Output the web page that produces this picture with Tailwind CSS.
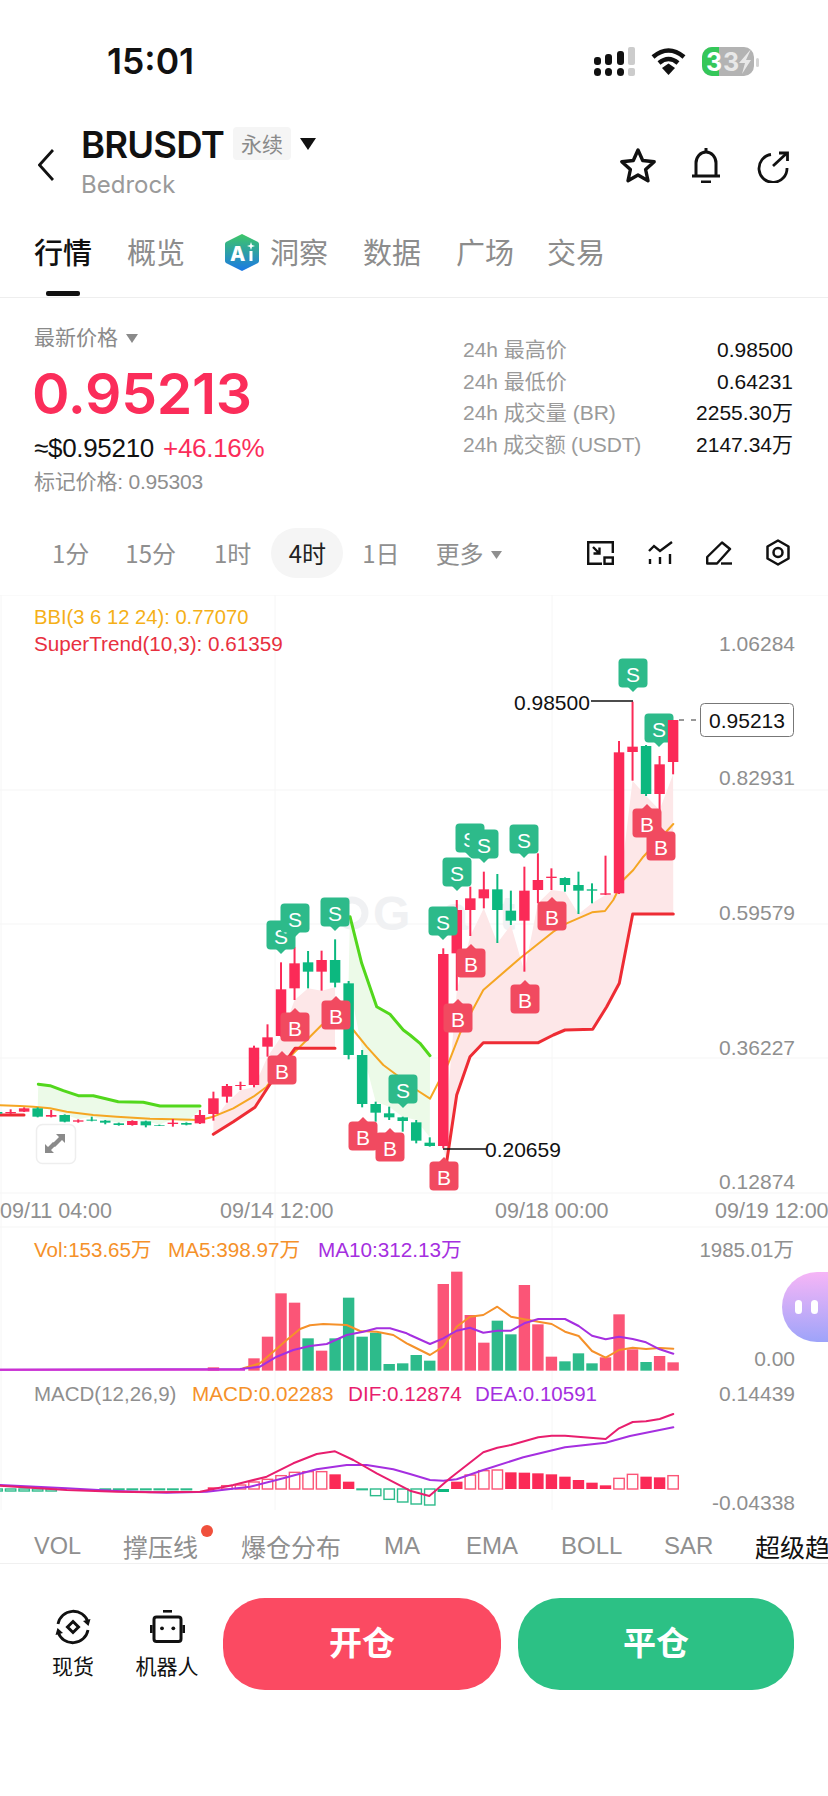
<!DOCTYPE html>
<html lang="zh-CN">
<head>
  <meta charset="UTF-8" />
  <meta name="viewport" content="width=device-width, initial-scale=1.0"/>
  <title>BRUSDT</title>
  <script src="https://cdn.jsdelivr.net/npm/@tailwindcss/browser@4"></script>
</head>
<body class="bg-white text-[#111] font-['Liberation_Sans','Noto_Sans_CJK_SC',sans-serif]">
<div class="relative w-[828px] h-[1796px] overflow-hidden flex flex-col bg-white">

  <!-- status bar -->
  <div class="h-[110px] shrink-0 flex items-start justify-between pt-[43px] pl-[107px] pr-[68px]">
    <span class="font-['Inter',sans-serif] font-semibold text-[35.500px] leading-[38px]">15:01</span>
    <svg width="168" height="32" viewBox="592 46 168 32" class="mt-[3px] font-['Inter',sans-serif]">
      <rect x="594" y="57" width="7" height="8" rx="3" fill="#111"/><rect x="605" y="54" width="7" height="11" rx="3" fill="#111"/><rect x="617" y="51" width="7" height="14" rx="3" fill="#111"/><rect x="628" y="47" width="7" height="18" rx="2" fill="#ccc"/>
      <rect x="594" y="68" width="7" height="8" rx="3.5" fill="#111"/><rect x="605" y="68" width="7" height="8" rx="3.5" fill="#111"/><rect x="617" y="68" width="7" height="8" rx="3.5" fill="#111"/><rect x="628" y="68" width="7" height="8" rx="2" fill="#ccc"/>
      <path d="M653 57 Q668.500 44 684 57" fill="none" stroke="#111" stroke-width="4.500"/>
      <path d="M659 63 Q668.500 55 678 63" fill="none" stroke="#111" stroke-width="4.500"/>
      <path d="M662 68 L668.500 63.500 L675 68 L668.500 75 Z" fill="#111"/>
      <rect x="702" y="47" width="52" height="29" rx="10" fill="#b3b3b3"/>
      <path d="M712 47 H719 V76 H712 A10 10 0 0 1 702 66 V57 A10 10 0 0 1 712 47 Z" fill="#34c759"/>
      <rect x="756" y="58" width="3" height="9" rx="1.500" fill="#d4d4d4"/>
      <text x="706" y="71" font-size="25" font-weight="700" fill="#fff">3</text>
      <text x="723" y="71" font-size="25" font-weight="700" fill="#e8e8e8">3</text>
      <path d="M751 49 L739 63 H745 L742 74 L751 60 H746 Z" fill="#e8e8e8"/>
    </svg>
  </div>

  <!-- title row -->
  <div class="h-[112px] shrink-0 flex items-start pl-[38px] pr-[38px]">
    <svg width="16" height="32" viewBox="0 0 16 32" class="mt-[39px] shrink-0" fill="none" stroke="#111" stroke-width="2.800"><path d="M15 1 L1.500 16 L15 31"/></svg>
    <div class="ml-[27px] w-[540px] shrink-0">
      <div class="flex items-center h-[33px] mt-[19px]">
        <span class="w-[152px] shrink-0 font-['Inter',sans-serif] font-semibold text-[36.500px] leading-[33px] tracking-[-0.8px]">BRUSDT</span>
        <span class="-mt-[4px] w-[58px] h-[33px] rounded-[4px] bg-[#f5f5f5] text-[#8a8a8a] text-[21px] flex items-center justify-center font-['Noto_Sans_CJK_SC',sans-serif]">永续</span>
        <svg width="16" height="12" viewBox="0 0 16 12" class="ml-[9px] -mt-[3px]"><path d="M0 0 H16 L8 12 Z" fill="#111"/></svg>
      </div>
      <div class="mt-[9px] text-[24px] leading-[28px] text-[#9a9a9a] font-['Inter',sans-serif]">Bedrock</div>
    </div>
    <svg width="40" height="40" viewBox="0 0 40 40" class="-ml-[3px] mt-[37px] shrink-0" fill="none" stroke="#111" stroke-width="3.400" stroke-linejoin="round"><path d="M20 3 L24.700 13.500 L36.200 14.750 L27.600 22.500 L30 33.750 L20 28 L10 33.750 L12.400 22.500 L3.800 14.750 L15.300 13.500 Z"/></svg>
    <svg width="30" height="36" viewBox="0 0 30 36" class="ml-[33px] mt-[37px] shrink-0" fill="none" stroke="#111" stroke-width="3"><path d="M5 29 V16 A10 11 0 0 1 25 16 V29"/><path d="M1 29 H29"/><path d="M15 1 V5"/><path d="M10 35 H20" stroke-width="3"/></svg>
    <svg width="32" height="32" viewBox="0 0 32 32" class="ml-[36px] mt-[41px] shrink-0" fill="none" stroke="#111" stroke-width="2.800"><path d="M14 3.500 A14 14 0 1 0 30 17"/><path d="M16 15 L30 2"/><path d="M22 2 H30.500 V10"/></svg>
  </div>

  <!-- tabs -->
  <div class="relative h-[76px] shrink-0 border-b border-[#eeeeee] flex items-start pl-[34px] text-[29px] leading-[38px] text-[#8c8c8c] font-['Noto_Sans_CJK_SC',sans-serif]">
    <span class="relative mt-[10px] text-[#111] font-medium">行情<span class="absolute left-[12px] top-[59px] w-[34px] h-[5px] rounded-[2px] bg-[#111]"></span></span>
    <span class="ml-[35px] mt-[10px]">概览</span>
    <svg width="36" height="39" viewBox="0 0 36 39" class="ml-[39px] mt-[11px] shrink-0 font-['Inter',sans-serif]">
      <defs><linearGradient id="aiGrad" x1="0" y1="0" x2="0" y2="1"><stop offset="0" stop-color="#3ec767"/><stop offset="1" stop-color="#1c78e6"/></linearGradient></defs>
      <path d="M18 1 L34 9 Q35 10 35 11 V28 Q35 29 34 30 L18 38 L2 30 Q1 29 1 28 V11 Q1 10 2 9 Z" fill="url(#aiGrad)"/>
      <text x="6" y="28" font-size="20" font-weight="800" fill="#fff">A</text>
      <path d="M27 9 L28 12 L31 13 L28 14 L27 17 L26 14 L23 13 L26 12 Z" fill="#fff"/>
      <rect x="25.500" y="18" width="3" height="10" fill="#fff"/>
    </svg>
    <span class="ml-[10px] mt-[10px]">洞察</span>
    <span class="ml-[35px] mt-[10px]">数据</span>
    <span class="ml-[35px] mt-[10px]">广场</span>
    <span class="ml-[33px] mt-[10px]">交易</span>
  </div>

  <!-- price block -->
  <div class="h-[222px] shrink-0 flex pl-[34px] pr-[35px]">
    <div class="w-[429px] shrink-0">
      <div class="mt-[26px] flex items-center h-[26px] text-[21px] text-[#8a8a8a] font-['Noto_Sans_CJK_SC',sans-serif]">最新价格
        <svg width="12" height="9" viewBox="0 0 12 9" class="ml-[8px] mt-[3px]"><path d="M0 0 H12 L6 9 Z" fill="#8a8a8a"/></svg>
      </div>
      <div class="mt-[11px] -ml-[2px] h-[66px] font-['Inter',sans-serif] font-semibold text-[57px] leading-[66px] tracking-[-0.3px] text-[#fb2d5a]">0.95213</div>
      <div class="mt-[6px] flex items-center h-[30px] text-[26px] leading-[30px] tracking-[-0.3px]">
        <span>≈$0.95210</span><span class="ml-[9px] text-[#fb2d5a]">+46.16%</span>
      </div>
      <div class="mt-[4px] text-[21px] leading-[30px] tracking-[-0.2px] text-[#8f8f8f]">标记价格: 0.95303</div>
    </div>
    <div class="flex-1 mt-[36px] text-[21px] leading-[32px]">
      <div class="flex justify-between h-[31.700px]"><span class="text-[#9a9a9a]">24h 最高价</span><span>0.98500</span></div>
      <div class="flex justify-between h-[31.700px]"><span class="text-[#9a9a9a]">24h 最低价</span><span>0.64231</span></div>
      <div class="flex justify-between h-[31.700px]"><span class="text-[#9a9a9a]">24h 成交量 (BR)</span><span>2255.30万</span></div>
      <div class="flex justify-between h-[31.700px]"><span class="text-[#9a9a9a] tracking-[-0.2px]">24h 成交额 (USDT)</span><span>2147.34万</span></div>
    </div>
  </div>

  <!-- interval row -->
  <div class="h-[75px] shrink-0 flex items-start text-[24px] text-[#8f8f8f] font-['Noto_Sans_CJK_SC',sans-serif]">
    <span class="ml-[52px] mt-[8px] h-[50px] leading-[50px]">1分</span>
    <span class="ml-[36px] mt-[8px] h-[50px] leading-[50px]">15分</span>
    <span class="ml-[38px] mt-[8px] h-[50px] leading-[50px]">1时</span>
    <span class="ml-[20px] mt-[8px] w-[72px] h-[50px] leading-[50px] rounded-[25px] bg-[#f5f5f5] text-center text-[#222]">4时</span>
    <span class="ml-[19px] mt-[8px] h-[50px] leading-[50px]">1日</span>
    <span class="ml-[36px] mt-[8px] h-[50px] leading-[50px]">更多</span>
    <svg width="11" height="8" viewBox="0 0 11 8" class="ml-[7px] mt-[31px]"><path d="M0 0 H11 L5.500 8 Z" fill="#8f8f8f"/></svg>
    <svg width="27" height="24" viewBox="0 0 27 24" class="ml-[85px] mt-[21px]" fill="none" stroke="#111" stroke-width="2.400"><path d="M15 22.800 H1.200 V1.200 H25.800 V12"/><rect x="17.500" y="16.500" width="8.300" height="6.300"/><path d="M6 6 L12 12 M12.500 6.500 V12.500 H6.500"/></svg>
    <svg width="25" height="24" viewBox="0 0 25 24" class="ml-[34px] mt-[21px]" fill="none" stroke="#111" stroke-width="2.400"><path d="M1 10 L6 5 L12 10 L24 1"/><path d="M2 18 V23 M12 16 V23 M22 13 V23"/></svg>
    <svg width="26" height="24" viewBox="0 0 26 24" class="ml-[33px] mt-[21px]" fill="none" stroke="#111" stroke-width="2.400" stroke-linejoin="round"><path d="M1.200 16 L16 1.500 L24 8 L11 22.500 H1.200 Z"/><path d="M15 22.500 H26"/></svg>
    <svg width="24" height="27" viewBox="0 0 24 27" class="ml-[34px] mt-[19px]" fill="none" stroke="#111" stroke-width="2.500" stroke-linejoin="round"><path d="M12 1.500 L22.500 7.500 V19.500 L12 25.500 L1.500 19.500 V7.500 Z"/><circle cx="12" cy="13.500" r="4.500"/></svg>
  </div>

  <!-- chart canvas, drawn in page coordinates -->
  <div class="relative h-[915px] shrink-0">
    <svg id="chart" width="828" height="915" viewBox="0 595 828 915" class="block font-['Liberation_Sans','Noto_Sans_CJK_SC',sans-serif]"></svg>
    <!-- assistant bubble -->
    <div class="absolute right-0 top-[677px] w-[46px] h-[70px] rounded-l-[35px] bg-gradient-to-b from-[#f6b5f6] to-[#9da3f9] flex items-center pl-[13px] gap-[9px]">
      <span class="w-[7px] h-[14px] rounded-full bg-white"></span>
      <span class="w-[7px] h-[14px] rounded-full bg-white"></span>
    </div>
  </div>

  <!-- indicator tabs -->
  <div class="h-[54px] shrink-0 border-b border-[#f0f0f0] flex items-start overflow-hidden whitespace-nowrap text-[25px] leading-[36px] pt-[18px] text-[#8f8f8f] font-['Noto_Sans_CJK_SC',sans-serif]">
    <span class="ml-[34px] w-[47px] shrink-0 text-[23.500px] font-['Liberation_Sans',sans-serif]">VOL</span>
    <span class="relative ml-[42px] w-[74px] shrink-0">撑压线<span class="absolute left-[78px] top-[-3px] w-[12px] h-[12px] rounded-full bg-[#f0503c]"></span></span>
    <span class="ml-[44px] w-[100px] shrink-0">爆仓分布</span>
    <span class="ml-[43px] w-[37px] shrink-0 text-[24px] font-['Liberation_Sans',sans-serif]">MA</span>
    <span class="ml-[45px] w-[50px] shrink-0 text-[24px] font-['Liberation_Sans',sans-serif]">EMA</span>
    <span class="ml-[45px] w-[58px] shrink-0 text-[24px] font-['Liberation_Sans',sans-serif]">BOLL</span>
    <span class="ml-[45px] w-[46px] shrink-0 text-[24px] font-['Liberation_Sans',sans-serif]">SAR</span>
    <span class="ml-[45px] shrink-0 text-[#111]">超级趋势</span>
  </div>

  <!-- bottom actions -->
  <div class="flex-1 flex items-start pt-[34px] font-['Noto_Sans_CJK_SC',sans-serif]">
    <div class="ml-[42px] w-[62px] flex flex-col items-center mt-[11px]">
      <svg width="36" height="36" viewBox="0 0 36 36" fill="none" stroke="#111" stroke-width="2.800">
        <path d="M3 15 A15.500 15.500 0 0 1 33 13"/><path d="M33 21 A15.500 15.500 0 0 1 3 23"/>
        <path d="M28 12 L33.500 17 L35.500 10 Z" fill="#111" stroke="none"/><path d="M8 24 L2.500 19 L0.500 26 Z" fill="#111" stroke="none"/>
        <path d="M18 12.500 L23.500 18 L18 23.500 L12.500 18 Z" stroke-width="3"/>
      </svg>
      <span class="mt-[8px] text-[21px] leading-[24px]">现货</span>
    </div>
    <div class="ml-[31px] w-[64px] flex flex-col items-center mt-[12px]">
      <svg width="35" height="33" viewBox="0 0 35 33" fill="none" stroke="#111">
        <path d="M13 1.300 H22" stroke-width="2.600"/><rect x="4" y="7" width="27" height="24.500" rx="2.500" stroke-width="3"/>
        <path d="M1.300 15 V23 M33.700 15 V23" stroke-width="2.600"/>
        <circle cx="12" cy="18.300" r="1.900" fill="#111" stroke="none"/><circle cx="23.300" cy="18.300" r="1.900" fill="#111" stroke="none"/>
      </svg>
      <span class="mt-[10px] text-[21px] leading-[24px] whitespace-nowrap">机器人</span>
    </div>
    <button class="ml-[24px] w-[278px] h-[92px] rounded-[42px] bg-[#fb4a62] text-white text-[33px] font-bold pb-[4px]">开仓</button>
    <button class="ml-[17px] w-[276px] h-[92px] rounded-[42px] bg-[#2cc185] text-white text-[33px] font-bold pb-[4px]">平仓</button>
  </div>
</div>

<script>
  const RED = "#fb2a57", GREEN = "#0cb87f", VRED = "#fb5577", VGREEN = "#2dbb8b";
  const X = i => 37.67 + 13.52 * i;
  // measured points: [x, y] at 3x from a crop whose corner is (ox, oy)
  const crop = (ox, oy, pts) => pts.map(([x, y]) => [ox + x / 3, oy + y / 3]);
  const str = pts => pts.map(p => p[0].toFixed(1) + "," + p[1].toFixed(1)).join(" ");
  const line = (pts, color, w) => `<polyline points="${str(pts)}" fill="none" stroke="${color}" stroke-width="${w}" stroke-linejoin="round" stroke-linecap="round"/>`;
  const poly = (pts, color) => `<polygon points="${str(pts)}" fill="${color}"/>`;
  const label = (x, y, txt, color, anchor = "start", size = 20.5) => `<text x="${x}" y="${y}" fill="${color}" text-anchor="${anchor}" font-size="${size}" dominant-baseline="central">${txt}</text>`;

  // [high, bodyTop, bodyBottom, low, colour], crop units
  const first = [
    [634,636,641,642,"g"], [628,636,640,642,"r"], [622,625,635,636,"r"],
    [622,625,650,652,"g"], [630,645,650,652,"r"], [643,645,665,667,"g"], [658,661,665,668,"r"], [650,659,662,664,"g"],
    [660,662,668,673,"g"], [668,670,675,677,"g"], [661,663,675,677,"r"], [662,664,676,682,"g"], [674,675,677,678,"g"],
    [657,668,672,680,"r"], [667,669,674,676,"g"], [630,645,670,672,"r"], [575,595,642,662,"r"], [552,558,590,608,"r"],
    [545,555,558,570,"r"], [437,443,555,562,"r"], [373,412,440,470,"r"], [187,268,408,410,"r"], [140,190,265,300,"r"],
    [153,187,215,265,"g"], [152,180,215,272,"r"], [118,180,248,262,"g"], [243,250,465,478,"g"], [450,465,612,622,"g"],
    [605,612,638,665,"g"], [620,640,652,660,"g"], [650,652,663,695,"g"], [660,667,722,730,"g"], [712,728,738,740,"g"],
    [145,162,738,745,"r"], [0,30,160,272,"r"]
  ];
  const second = [
    [740,775,810,888,"r"], [695,748,775,805,"r"], [702,748,810,909,"g"], [752,812,842,855,"g"], [680,752,842,995,"r"],
    [640,720,750,790,"r"], [685,710,714,750,"r"], [712,714,735,755,"g"], [695,735,752,822,"g"], [730,748,752,790,"g"],
    [647,760,764,765,"r"], [303,337,760,762,"r"], [185,320,336,422,"r"], [315,318,462,468,"g"], [348,373,462,510,"r"],
    [240,240,366,403,"r"]
  ];
  const candles = [
    ...first.map((c, n) => ({ i: n - 3, hi: 900 + c[0] / 3, top: 900 + c[1] / 3, bot: 900 + c[2] / 3, lo: 900 + c[3] / 3, col: c[4] })),
    ...second.map((c, n) => ({ i: n + 32, hi: 640 + c[0] / 3, top: 640 + c[1] / 3, bot: 640 + c[2] / 3, lo: 640 + c[3] / 3, col: c[4] }))
  ];
  const at = (a, b) => candles.filter(c => c.i >= a && c.i <= b);

  const bbi = [...crop(0, 900, [[0,616],[60,618],[100,620],[150,625],[200,635],[280,645],[350,650],[450,656],[520,658],[600,660],[640,650],[700,625],[760,590],[800,560],[850,490],[900,440],[965,375],[1006,350],[1060,390],[1100,440],[1150,495],[1190,525],[1250,570]]),
    ...crop(410, 900, [[60,596],[115,490],[150,400],[220,270],[330,175],[430,95],[470,70],[546,37],[585,33],[610,0]]),
    ...crop(410, 640, [[640,720],[670,690],[700,650],[790,552]])];
  const greenA = crop(0, 900, [[115,553],[150,557],[190,572],[235,587],[280,587],[355,605],[430,607],[480,618],[600,618]]);
  const greenB = [...crop(0, 900, [[1050,50],[1085,190],[1130,320],[1170,343],[1210,390]]), ...crop(410, 900, [[0,405],[30,430],[60,467]])];
  const redA = crop(0, 900, [[640,703],[700,665],[765,622],[805,560],[845,500],[885,445],[1005,445]]);
  const redB = crop(410, 900, [[110,785],[140,585],[180,470],[220,428],[385,428],[430,405],[465,390],[548,388],[590,320],[628,250],[668,42],[790,42]]);

  const marker = (cx, cy, type) => {
    const s = type === "S";
    const nub = s ? `${cx-5},${cy+14} ${cx},${cy+19} ${cx+5},${cy+14}` : `${cx-5},${cy-14} ${cx},${cy-19} ${cx+5},${cy-14}`;
    const fill = s ? "#2dba8a" : "#f14a60";
    return `<rect x="${cx-14.5}" y="${cy-14.5}" width="29" height="29" rx="4" fill="${fill}"/><polygon points="${nub}" fill="${fill}"/>` +
      `<text x="${cx}" y="${cy+1}" fill="#fff" text-anchor="middle" dominant-baseline="central" font-size="21">${type}</text>`;
  };

  let svg = "";
  // grid
  [595, 790, 924, 1058, 1193, 1227].forEach(y => svg += `<line x1="0" x2="828" y1="${y}" y2="${y}" stroke="#f5f5f5"/>`);
  [1, 275, 552].forEach(x => svg += `<line x1="${x}" x2="${x}" y1="595" y2="1510" stroke="#f6f6f6"/>`);
  // watermark
  svg += `<text x="373" y="930" font-size="48" font-weight="700" fill="#f0f1f3" textLength="200">Gate</text><circle cx="352" cy="913" r="13" fill="none" stroke="#f0f1f3" stroke-width="7"/>`;
  // fills between the bands and the candles
  svg += poly([...greenA, ...at(0, 12).reverse().map(c => [X(c.i), c.hi])], "#ecfae8");
  svg += poly([...greenB, ...at(23, 29).reverse().map(c => [X(c.i), c.hi])], "#ecfae8");
  svg += poly([...at(13, 22).map(c => [X(c.i), c.lo]), ...[...redA].reverse()], "#fde7e8");
  svg += poly([...at(30, 47).map(c => [X(c.i), c.lo]), ...[...redB].reverse()], "#fde7e8");
  svg += line(greenA, "#52d71c", 3) + line(greenB, "#52d71c", 3);
  svg += line(bbi, "#f5a623", 2);
  svg += line([[0,1115],[24,1115]], "#ee2c34", 3) + line(redA, "#ee2c34", 3) + line(redB, "#ee2c34", 3);
  svg += marker(659, 728, "S");
  candles.forEach(c => {
    const col = c.col === "r" ? RED : GREEN, x = X(c.i);
    svg += `<line x1="${x}" x2="${x}" y1="${c.hi}" y2="${c.lo}" stroke="${col}" stroke-width="2"/>`;
    svg += `<rect x="${x-5.25}" y="${c.top}" width="10.5" height="${c.bot-c.top}" fill="${col}"/>`;
  });
  [[281,935,"S"],[295,918,"S"],[335,912,"S"],[403,1089,"S"],[633,673,"S"],[524,839,"S"],[470,838,"S"],[484,844,"S"],[457,872,"S"],[443,921,"S"],
   [282,1070,"B"],[295,1027,"B"],[336,1015,"B"],[363,1136,"B"],[390,1147,"B"],[647,823,"B"],[661,846,"B"],[552,916,"B"],[471,963,"B"],[525,999,"B"],[458,1018,"B"],[444,1176,"B"]]
    .forEach(m => svg += marker(...m));

  // price pane labels
  svg += label(34, 617, "BBI(3 6 12 24): 0.77070", "#f5b018", "start", 20.2) + label(34, 643, "SuperTrend(10,3): 0.61359", "#e8303f", "start", 20.7);
  [["1.06284",643],["0.82931",777],["0.59579",912],["0.36227",1047],["0.12874",1181]].forEach(a => svg += label(795, a[1], a[0], "#8f8f8f", "end", 21));
  svg += label(514, 702, "0.98500", "#111", "start", 21) + `<line x1="591" x2="633" y1="701" y2="701" stroke="#111" stroke-width="1.500"/>`;
  svg += label(485, 1149, "0.20659", "#111", "start", 21) + `<line x1="443" x2="486" y1="1149" y2="1149" stroke="#111" stroke-width="1.500"/>`;
  svg += `<line x1="679" x2="700" y1="720" y2="720" stroke="#333" stroke-width="1" stroke-dasharray="5 7"/><rect x="700.500" y="703.500" width="93" height="33" rx="4" fill="#fff" stroke="#777"/>` + label(747, 720, "0.95213", "#111", "middle", 21);
  [["09/11 04:00",0],["09/14 12:00",220],["09/18 00:00",495],["09/19 12:00",715]].forEach(a => svg += label(a[1], 1211, a[0], "#8f8f8f", "start", 21.5));
  // expand button
  svg += `<rect x="36.500" y="1124.500" width="39" height="39" rx="6" fill="#fff" stroke="#eeeeee" stroke-width="1.500"/><path d="M65 1134 H56 L59 1137 L52 1144 L55 1147 L62 1140 L65 1143 Z M45 1153 H54 L51 1150 L56 1145 L53 1142 L48 1147 L45 1144 Z" fill="#8a8a8a"/>`;

  // volume pane: [index, top in crop units, colour]
  const vols = [[13,442,"r"],[16,415,"r"],[17,350,"r"],[18,220,"r"],[19,248,"r"],[20,355,"g"],[21,392,"r"],[22,355,"g"],[23,233,"g"],[24,350,"g"],[25,338,"g"],[26,432,"g"],[27,430,"g"],[28,405,"g"],[29,422,"g"],
    [30,192,"r"],[31,155,"r"],[32,285,"r"],[33,368,"r"],[34,302,"g"],[35,343,"g"],[36,195,"r"],[37,313,"r"],[38,410,"r"],[39,424,"g"],[40,400,"g"],[41,430,"g"],[42,412,"r"],[43,283,"r"],[44,388,"r"],[45,426,"g"],[46,408,"r"],[47,427,"r"]];
  const base = 1220 + 452 / 3;
  vols.forEach(([i, t, c]) => {
    const y = 1220 + t / 3;
    svg += `<rect x="${X(i)-5.7}" y="${y}" width="11.4" height="${base-y}" fill="${c === "r" ? VRED : VGREEN}"/>`;
  });
  const ma5 = [...crop(0, 1220, [[730,445],[780,430],[820,395],[860,360],[900,327],[930,316],[970,312],[1040,315],[1080,333],[1130,335],[1180,345],[1220,370]]),
    ...crop(410, 1220, [[0,375],[60,405],[100,380],[140,320],[180,290],[220,285],[262,260],[303,290],[343,298],[385,305],[425,312],[465,335],[506,348],[546,393],[587,413],[627,390],[668,383],[708,387],[749,384],[790,386]])];
  const ma10 = [...crop(0, 1220, [[0,449],[720,447],[780,440],[830,410],[880,390],[930,378],[980,372],[1040,345],[1090,335],[1130,325],[1170,325],[1220,340]]),
    ...crop(410, 1220, [[0,345],[60,372],[100,355],[140,332],[180,323],[220,338],[262,332],[303,332],[343,310],[385,297],[465,297],[506,318],[546,347],[587,358],[627,350],[668,357],[708,367],[749,388],[790,401]])];
  svg += line(ma5, "#f5912a", 2) + line(ma10, "#a52fe0", 2);
  svg += `<line x1="0" x2="245" y1="1369.700" y2="1369.700" stroke="#cf2fd0" stroke-width="2"/>`;
  svg += label(34, 1249, "Vol:153.65万", "#f5912a") + label(168, 1249, "MA5:398.97万", "#f5912a", "start", 20.7) + label(318, 1249, "MA10:312.13万", "#a52fe0", "start", 20.7);
  svg += label(794, 1249, "1985.01万", "#8f8f8f", "end") + label(795, 1358, "0.00", "#8f8f8f", "end", 21);

  // MACD pane: [index, edge in crop units, hollow]
  const zero = 807;
  const macd = [[-3,813,1],[-2,813,1],[-1,813,1],[0,813,1],[1,813,1],[5,809,1],[6,809,1],[7,809,1],[8,809,1],[9,809,1],[10,809,1],[11,809,1],
    [13,802,0],[14,797,1],[15,795,1],[16,786,1],[17,778,1],[18,767,1],[19,757,1],[20,755,1],[21,755,1],[22,763,0],[23,785,0],[24,809,1],[25,827,1],[26,838,1],[27,846,1],[28,852,1],[29,855,1],[30,816,0],
    [31,785,0],[32,765,1],[33,752,1],[34,750,1],[35,757,0],[36,758,0],[37,760,0],[38,763,0],[39,770,0],[40,780,0],[41,788,0],[42,796,0],[43,775,1],[44,763,1],[45,770,0],[46,772,0],[47,767,1]];
  macd.forEach(([i, e, hollow]) => {
    const y0 = 1220 + Math.min(e, zero) / 3, y1 = 1220 + Math.max(e, zero) / 3, down = e > zero;
    const h = y1 - y0;
    svg += hollow
      ? `<rect x="${X(i)-5.2}" y="${y0}" width="10.4" height="${h}" fill="#fff" stroke="${down ? VGREEN : VRED}" stroke-width="1.400"/>`
      : `<rect x="${X(i)-5.7}" y="${y0}" width="11.4" height="${h}" fill="${down ? GREEN : RED}"/>`;
  });
  const dif = [...crop(0, 1220, [[0,797],[200,810],[350,815],[450,817],[600,815],[700,795],[800,770],[880,730],[950,702],[1005,694],[1060,720],[1130,760],[1230,812]]),
    ...crop(410, 1220, [[58,828],[120,775],[220,697],[262,683],[303,675],[385,652],[425,647],[465,647],[587,657],[627,625],[668,606],[708,604],[749,597],[790,582]])];
  const dea = [...crop(0, 1220, [[0,795],[200,805],[350,813],[500,818],[620,815],[750,800],[850,775],[950,748],[1040,735],[1100,735],[1180,748]]),
    ...crop(410, 1220, [[0,762],[60,780],[100,782],[140,778],[220,750],[340,712],[465,682],[587,668],[660,648],[790,622]])];
  svg += line(dea, "#a52fe0", 2) + line(dif, "#e81e6e", 2);
  svg += label(34, 1393, "MACD(12,26,9)", "#8f8f8f") + label(192, 1393, "MACD:0.02283", "#f5912a", "start", 20.7) + label(348, 1393, "DIF:0.12874", "#e81e6e", "start", 20.7) + label(475, 1393, "DEA:0.10591", "#a52fe0");
  svg += label(795, 1393, "0.14439", "#8f8f8f", "end", 21) + label(795, 1502, "-0.04338", "#8f8f8f", "end", 21);

  document.getElementById("chart").innerHTML = svg;
</script>
</body>
</html>
